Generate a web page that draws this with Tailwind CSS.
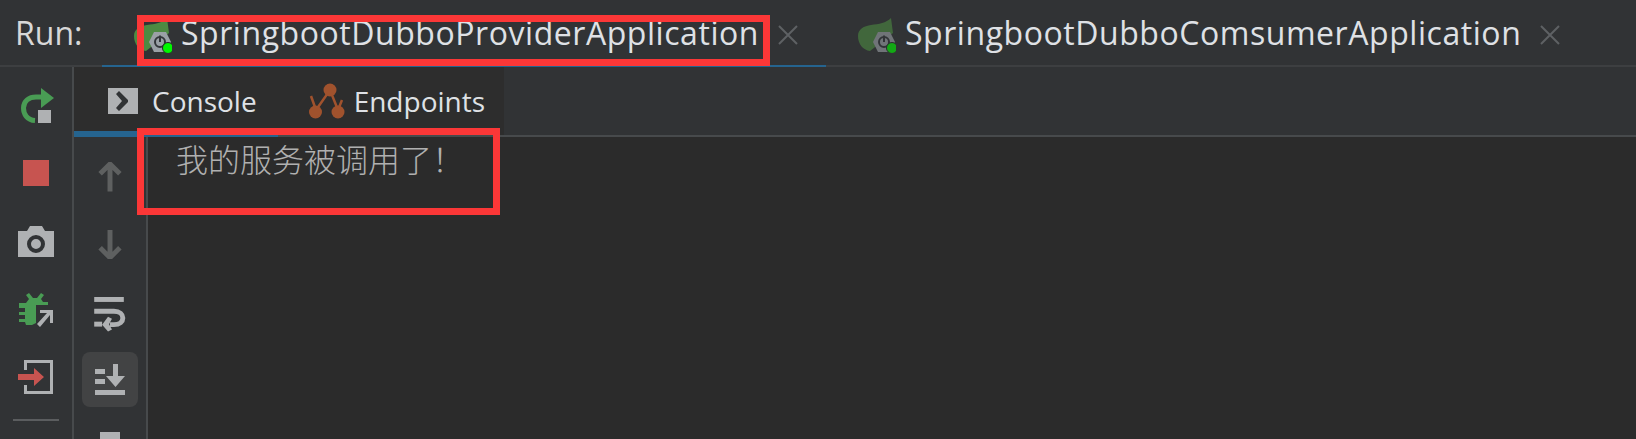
<!DOCTYPE html>
<html lang="en">

<head>
    <meta charset="UTF-8">
    <meta name="viewport" content="width=device-width, initial-scale=1.0">
    <script src="https://cdn.jsdelivr.net/npm/@tailwindcss/browser@4"></script>
    <title>Run</title>
</head>

<body class="bg-[#2b2b2b]">
    <div class="relative h-[439px] w-[1636px] overflow-hidden bg-[#2b2b2b] font-['Open_Sans','Noto_Sans_CJK_SC',sans-serif] text-[#dfe1e5]">
        <!-- Run tabs -->
        <div class="flex h-[67px] border-b-2 border-[#3d3f41] bg-[#313335]">
            <div class="w-[134px] pl-[15px] pt-[11px] text-[32px] leading-[44px] text-[#d8d8d8]">Run:</div>
            <div class="relative flex w-[724px]">
                <div class="absolute -bottom-[2px] -left-[32px] h-[2px] w-[724px] bg-[#25648f]"></div>
                <svg class="mt-[18px] h-[35px] w-[38px]" viewBox="0 0 38 35">
                    <path d="M0 18C0 11 6 8 13 7C21 6 28 5 33 0L35 15L12 33C5 32 0 26 0 18Z" fill="#4d8a42" />
                    <path d="M15 24L20 14H32L37 24L32 34H20Z" fill="#9aa0a6" />
                    <circle cx="26" cy="24" r="5" fill="none" stroke="#33363a" stroke-width="2" />
                    <path d="M26 17.500V24" stroke="#33363a" stroke-width="2" />
                    <circle cx="34" cy="30" r="5.500" fill="#00f800" stroke="#26282a" stroke-width="1" />
                </svg>
                <div class="pl-[9px] pt-[11px] text-[32px] leading-[44px] tracking-[0.55px]">SpringbootDubboProviderApplication</div>
                <svg class="ml-[19px] mt-[25px] h-[20px] w-[20px]" viewBox="0 0 20 20">
                    <path d="M1 1L19 19M19 1L1 19" stroke="#5e6164" stroke-width="2" />
                </svg>
            </div>
            <div class="flex">
                <svg class="mt-[18px] h-[35px] w-[38px] opacity-60" viewBox="0 0 38 35">
                    <path d="M0 18C0 11 6 8 13 7C21 6 28 5 33 0L35 15L12 33C5 32 0 26 0 18Z" fill="#4d8a42" />
                    <path d="M15 24L20 14H32L37 24L32 34H20Z" fill="#9aa0a6" />
                    <circle cx="26" cy="24" r="5" fill="none" stroke="#33363a" stroke-width="2" />
                    <path d="M26 17.500V24" stroke="#33363a" stroke-width="2" />
                    <circle cx="34" cy="30" r="5.500" fill="#00f800" stroke="#26282a" stroke-width="1" />
                </svg>
                <div class="pl-[9px] pt-[11px] text-[32px] leading-[44px] tracking-[0.55px]">SpringbootDubboComsumerApplication</div>
                <svg class="ml-[19px] mt-[25px] h-[20px] w-[20px]" viewBox="0 0 20 20">
                    <path d="M1 1L19 19M19 1L1 19" stroke="#5e6164" stroke-width="2" />
                </svg>
            </div>
        </div>

        <div class="flex h-[372px]">
            <!-- Run actions -->
            <div class="flex w-[74px] flex-col items-center border-r-2 border-[#474a4c] bg-[#313335]">
                <svg class="mt-[21px] h-[36px] w-[36px]" viewBox="0 0 36 36">
                    <path d="M17 32.500C9 32 5.500 26 5.500 20C5.500 13 11 9 18 9H24" fill="none" stroke="#499c54" stroke-width="5" />
                    <path d="M23 0L36 10L23 20Z" fill="#499c54" />
                    <rect x="20" y="22" width="13" height="13" fill="#afb1b3" />
                </svg>
                <div class="mt-[36px] h-[26px] w-[26px] bg-[#c75450]"></div>
                <svg class="mt-[40px] h-[31px] w-[36px]" viewBox="0 0 36 31">
                    <path d="M0 5H9L12 0H24L27 5H36V31H0Z" fill="#afb1b3" />
                    <circle cx="18" cy="18" r="7" fill="none" stroke="#313335" stroke-width="4" />
                </svg>
                <svg class="mt-[35px] h-[36px] w-[36px]" viewBox="0 0 36 36">
                    <path d="M11 1L15 6H19L23 1L26 3L23 7L25 10H30V13H18V31L14 33H8L7 30H1V27H7V23H1V20H7V16H1V11H8L11 7L8 3Z" fill="#499c54" />
                    <path d="M22 18H35V31H32V23L22 35L19 32L29 21H22Z" fill="#afb1b3" />
                </svg>
                <svg class="mt-[31px] h-[36px] w-[36px]" viewBox="0 0 36 36">
                    <path d="M6 11V1H35V35H6V26H9V32H32V4H9V11Z" fill="#afb1b3" />
                    <path d="M0 15H16V9L26 18L16 27V21H0Z" fill="#c75450" />
                </svg>
                <div class="mt-[24px] h-[2px] w-[46px] bg-[#5b5d5f]"></div>
            </div>

            <!-- Console toolbar column and output -->
            <div class="flex min-w-0 flex-1 flex-col">
                <div class="flex h-[68px]">
                    <div class="flex h-[68px] w-[430px] items-center bg-[#2d2d2d] pl-[34px]">
                        <svg class="h-[26px] w-[30px]" viewBox="0 0 30 26">
                            <rect width="30" height="26" fill="#afb1b3" />
                            <path d="M8 6L11 3L20 12V14L11 23L8 20L14 13Z" fill="#313335" />
                        </svg>
                        <span class="ml-[14px] text-[28px] leading-[40px]">Console</span>
                        <svg class="ml-[52px] h-[36px] w-[36px]" viewBox="0 0 36 36">
                            <path d="M2 13L7 27M7 27L21 7L29 27M33 17L29 27" fill="none" stroke="#a0522d" stroke-width="2.500" />
                            <circle cx="21" cy="7" r="6.500" fill="#a0522d" />
                            <circle cx="6.500" cy="29" r="6.500" fill="#a0522d" />
                            <circle cx="29" cy="29" r="6.500" fill="#a0522d" />
                        </svg>
                        <span class="ml-[9px] text-[28px] leading-[40px]">Endpoints</span>
                    </div>
                    <div class="h-[68px] flex-1 bg-[#313335]"></div>
                </div>

                <div class="relative h-[2px] bg-[#474a4c]">
                    <div class="absolute -top-[4px] left-0 h-[6px] w-[204px] bg-[#25648f]"></div>
                </div>

                <div class="flex min-h-0 flex-1">
                    <div class="flex w-[74px] flex-col items-center border-r-2 border-[#474a4c] bg-[#313335]">
                        <svg class="mt-[25px] h-[30px] w-[24px]" viewBox="0 0 24 30">
                            <path d="M12 2V30M2 12L12 2L22 12" fill="none" stroke="#5e6060" stroke-width="5" />
                        </svg>
                        <svg class="mt-[38px] h-[30px] w-[24px]" viewBox="0 0 24 30">
                            <path d="M12 0V28M2 18L12 28L22 18" fill="none" stroke="#5e6060" stroke-width="5" />
                        </svg>
                        <svg class="mt-[38px] h-[36px] w-[32px]" viewBox="0 0 32 36">
                            <rect x="0" y="0" width="30" height="5" fill="#afb1b3" />
                            <path d="M0 14.500H20C32 14.500 32 28 20 28H16" fill="none" stroke="#afb1b3" stroke-width="5" />
                            <rect x="0" y="25" width="8" height="5" fill="#afb1b3" />
                            <path d="M14 20L18 22L15 27.500L18 33L14 35L8 28Z" fill="#afb1b3" />
                        </svg>
                        <div class="mt-[19px] flex h-[56px] w-[56px] items-center justify-center rounded-lg bg-[#424344]">
                            <svg class="h-[31px] w-[30px]" viewBox="0 0 30 31">
                                <rect x="0" y="5" width="10" height="5" fill="#afb1b3" />
                                <rect x="0" y="15" width="10" height="5" fill="#afb1b3" />
                                <rect x="0" y="26" width="30" height="5" fill="#afb1b3" />
                                <path d="M18 0H23V12H30L20.500 23L11 12H18Z" fill="#afb1b3" />
                            </svg>
                        </div>
                        <div class="mt-[25px] h-[7px] w-[20px] shrink-0 bg-[#afb1b3]"></div>
                    </div>
                    <div class="flex-1 bg-[#2b2b2b] pl-[28px] font-['Noto_Sans_CJK_SC',sans-serif] text-[32px] leading-[42px] font-light text-[#b0b0b0]">我的服务被调用了！</div>
                </div>
            </div>
        </div>

        <!-- Red annotation boxes -->
        <div class="absolute left-[137px] top-[15px] h-[51px] w-[633px] border-[7px] border-[#fb3737]"></div>
        <div class="absolute left-[137px] top-[128px] h-[87px] w-[363px] border-[7px] border-[#fb3737]"></div>
    </div>
</body>

</html>
